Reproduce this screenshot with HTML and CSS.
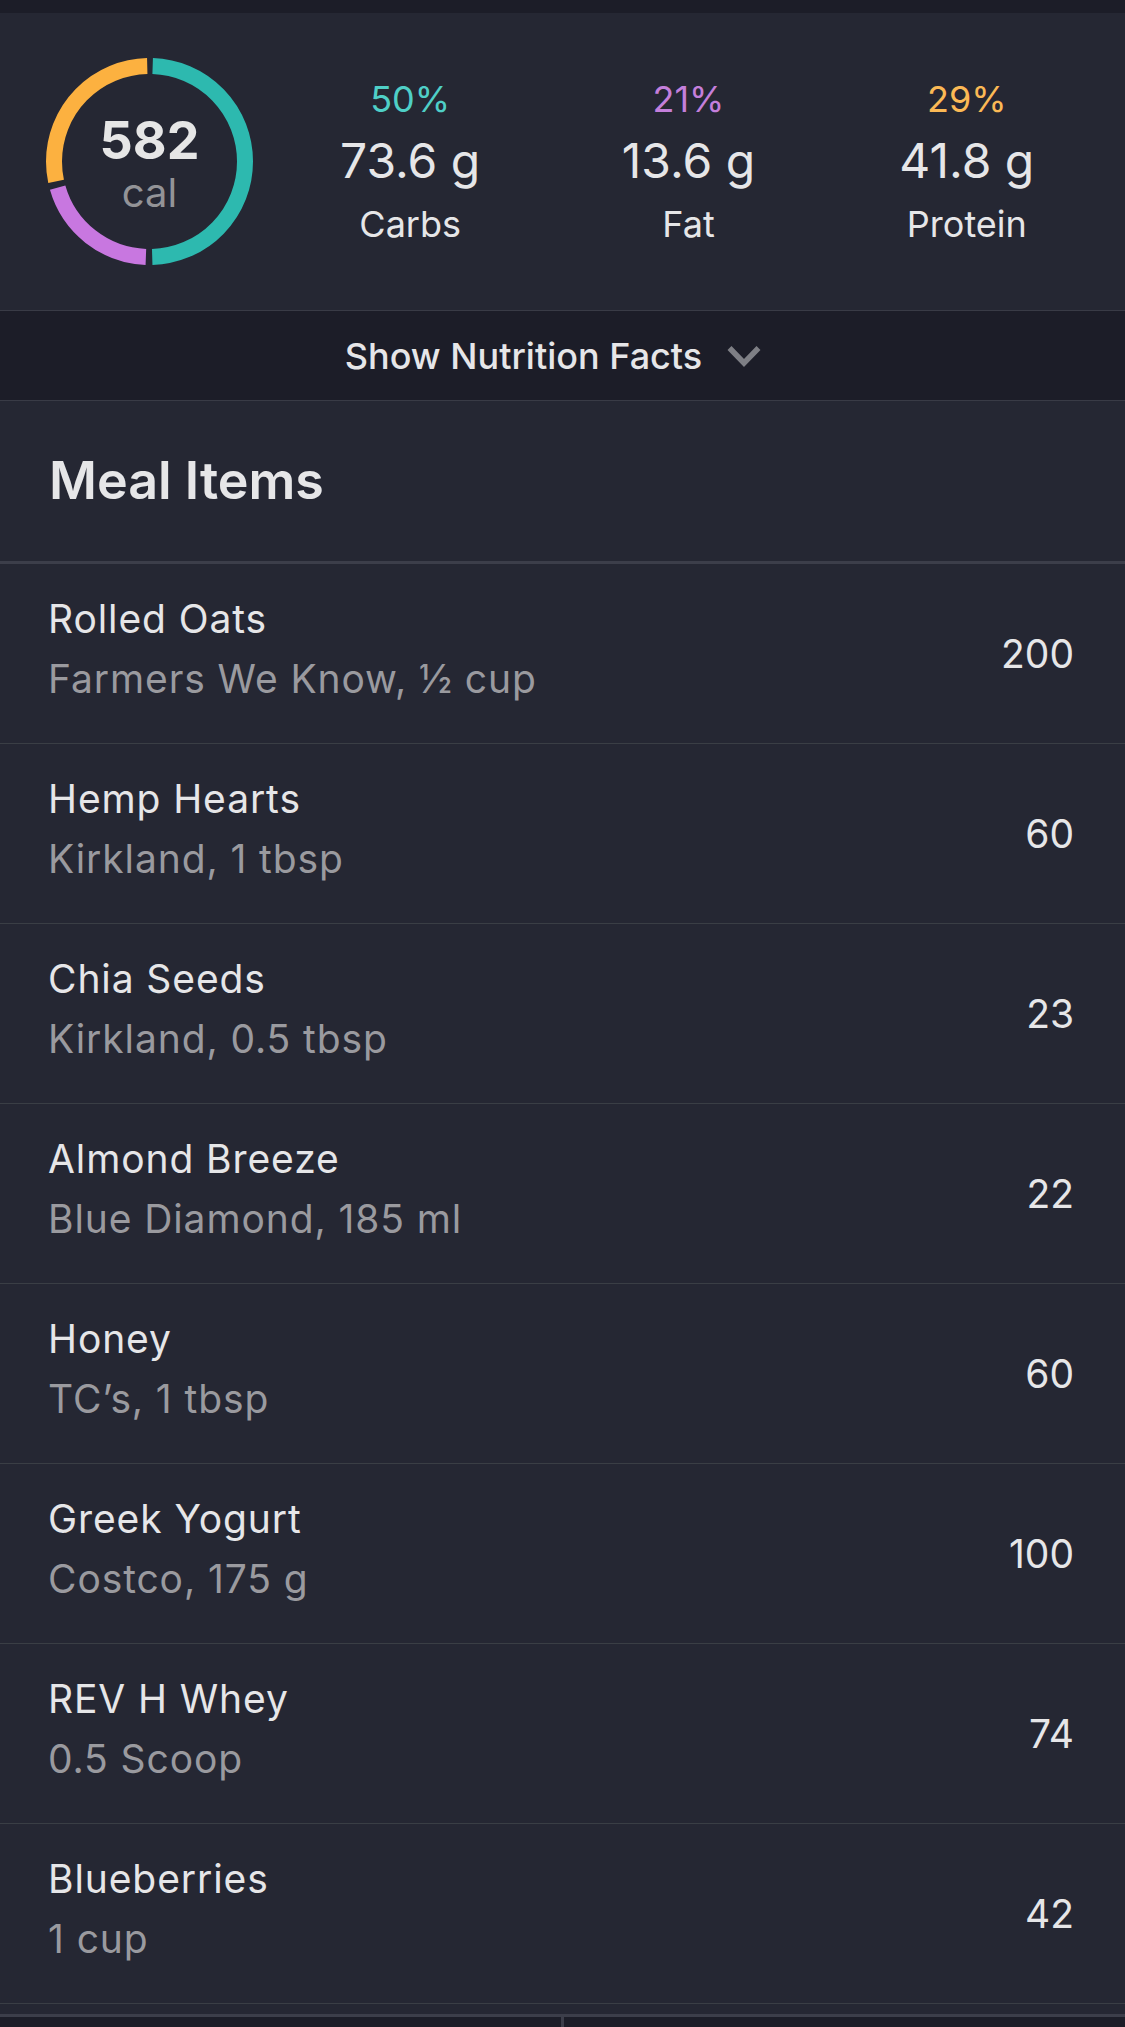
FILE: index.html
```html
<!DOCTYPE html>
<html lang="en">
<head>
    <meta charset="UTF-8">
    <meta name="viewport" content="width=device-width, initial-scale=1.0">
    <title>Meal | Breakfast</title>
    <link rel="stylesheet" href="styles.css">
</head>
<body>
    <div class="screen">
        <div class="status-strip"></div>

        <div class="summary">
            <div class="ring">
                <svg width="207" height="207" viewBox="0 0 207 207">
                    <g transform="rotate(-90 103.5 103.5)" fill="none" stroke-width="16">
                        <circle cx="103.5" cy="103.5" r="95.5" stroke="#2db9af" stroke-dasharray="293.5 600" stroke-dashoffset="-3.25"/>
                        <circle cx="103.5" cy="103.5" r="95.5" stroke="#c877e0" stroke-dasharray="119.5 600" stroke-dashoffset="-303.25"/>
                        <circle cx="103.5" cy="103.5" r="95.5" stroke="#fcb140" stroke-dasharray="167.5 600" stroke-dashoffset="-429.25"/>
                    </g>
                </svg>
                <div class="ring-label">
                    <div class="kcal">582</div>
                    <div class="unit">cal</div>
                </div>
            </div>

            <div class="macros">
                <div class="macro">
                    <div class="pct carbs">50%</div>
                    <div class="grams">73.6 g</div>
                    <div class="name">Carbs</div>
                </div>
                <div class="macro">
                    <div class="pct fat">21%</div>
                    <div class="grams">13.6 g</div>
                    <div class="name">Fat</div>
                </div>
                <div class="macro">
                    <div class="pct protein">29%</div>
                    <div class="grams">41.8 g</div>
                    <div class="name">Protein</div>
                </div>
            </div>
        </div>

        <div class="facts-toggle">
            <span>Show Nutrition Facts</span>
            <svg class="chevron" width="34" height="22" viewBox="0 0 34 22">
                <polyline points="2.5,3 17,18 31.5,3" fill="none" stroke="#7e7f85" stroke-width="5.5"/>
            </svg>
        </div>

        <div class="section-head">
            <h2>Meal Items</h2>
        </div>

        <div class="items" id="items-container"></div>

        <div class="spacer"></div>

        <div class="tab-bar">
            <div class="tab"></div>
            <div class="tab"></div>
        </div>
    </div>

    <script>
        const items = [
            { name: "Rolled Oats", detail: "Farmers We Know, ½ cup", cal: 200 },
            { name: "Hemp Hearts", detail: "Kirkland, 1 tbsp", cal: 60 },
            { name: "Chia Seeds", detail: "Kirkland, 0.5 tbsp", cal: 23 },
            { name: "Almond Breeze", detail: "Blue Diamond, 185 ml", cal: 22 },
            { name: "Honey", detail: "TC’s, 1 tbsp", cal: 60 },
            { name: "Greek Yogurt", detail: "Costco, 175 g", cal: 100 },
            { name: "REV H Whey", detail: "0.5 Scoop", cal: 74 },
            { name: "Blueberries", detail: "1 cup", cal: 42 }
        ];

        const itemsContainer = document.getElementById('items-container');

        items.forEach(item => {
            const row = document.createElement('div');
            row.className = 'meal-item';
            row.innerHTML = `
                <div class="item-info">
                    <div class="item-name">${item.name}</div>
                    <div class="item-detail">${item.detail}</div>
                </div>
                <div class="item-cal">${item.cal}</div>
            `;
            itemsContainer.appendChild(row);
        });
    </script>
</body>
</html>
```

FILE: styles.css
```css
* {
    margin: 0;
    padding: 0;
    box-sizing: border-box;
    font-family: 'Inter', 'Noto Sans', Arial, sans-serif;
}

body {
    background-color: #252733;
    color: #e6e6e8;
}

.screen {
    height: 100vh;
    overflow: hidden;
    display: flex;
    flex-direction: column;
}

.status-strip {
    height: 13px;
    background: #1c1d28;
    flex-shrink: 0;
}

/* calorie ring + macros */
.summary {
    display: flex;
    align-items: center;
    height: 298px;
    padding: 0 19px 0 46px;
    border-bottom: 1px solid #393b46;
    flex-shrink: 0;
}

.ring {
    position: relative;
    width: 207px;
    height: 207px;
    flex-shrink: 0;
}

.ring svg {
    display: block;
}

.ring-label {
    position: absolute;
    inset: 0;
    display: flex;
    flex-direction: column;
    align-items: center;
    justify-content: center;
    padding-top: 6px;
}

.kcal {
    font-size: 52px;
    line-height: 56px;
    font-weight: 700;
    color: #e6e6e6;
}

.unit {
    font-size: 40px;
    line-height: 48px;
    color: #939397;
}

.macros {
    flex: 1;
    display: flex;
    margin-left: 18px;
}

.macro {
    flex: 1;
    display: flex;
    flex-direction: column;
    align-items: center;
}

.pct {
    font-size: 36px;
    line-height: 44px;
}

.pct.carbs {
    color: #4fcfc7;
}

.pct.fat {
    color: #c47fdb;
}

.pct.protein {
    color: #fbb955;
}

.grams {
    font-size: 48px;
    line-height: 60px;
    margin-top: 10px;
}

.name {
    font-size: 36px;
    line-height: 44px;
    margin-top: 11px;
}

/* nutrition facts toggle */
.facts-toggle {
    display: flex;
    align-items: center;
    justify-content: center;
    gap: 25px;
    height: 90px;
    padding-right: 19px;
    background: #1c1d28;
    border-bottom: 1px solid #393b46;
    font-size: 36px;
    font-weight: 500;
    flex-shrink: 0;
}

.chevron {
    display: block;
}

.section-head {
    display: flex;
    align-items: center;
    height: 163px;
    padding-left: 49px;
    border-bottom: 3px solid #3c3e4a;
    flex-shrink: 0;
}

.section-head h2 {
    font-size: 52px;
    line-height: 62px;
    font-weight: 600;
}

/* meal rows */
.meal-item {
    display: flex;
    align-items: center;
    justify-content: space-between;
    height: 180px;
    padding: 0 51px 0 48px;
    border-bottom: 1px solid #3a3e45;
}

.item-info {
    padding-bottom: 10px;
}

.item-name {
    font-size: 39px;
    line-height: 48px;
    letter-spacing: 0.9px;
}

.item-detail {
    font-size: 39px;
    line-height: 48px;
    letter-spacing: 0.9px;
    margin-top: 12px;
    color: #9a9a9f;
}

.item-cal {
    font-size: 39px;
    line-height: 48px;
}

.spacer {
    height: 10px;
    flex-shrink: 0;
}

.tab-bar {
    display: flex;
    height: 150px;
    background: #1c1d28;
    border-top: 3px solid #3c3e4a;
    flex-shrink: 0;
}

.tab {
    flex: 1;
}

.tab + .tab {
    border-left: 3px solid #3c3e4a;
}
```
